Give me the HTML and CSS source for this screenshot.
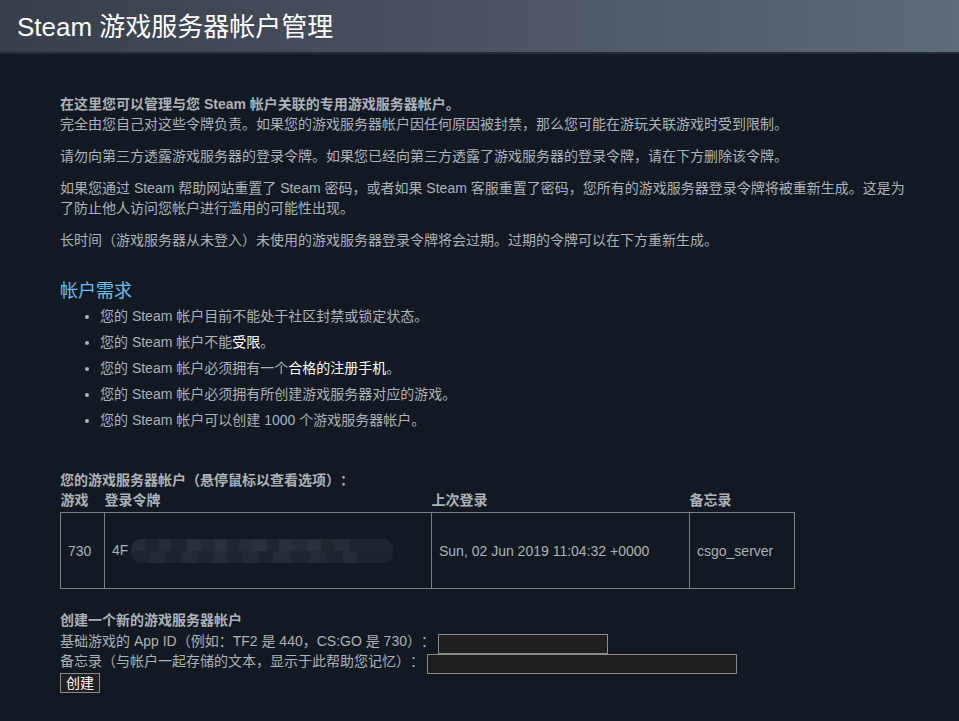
FILE: index.html
```html
<!DOCTYPE html>
<html lang="zh-CN">
<head>
    <meta charset="UTF-8">
    <title>Steam 游戏服务器帐户管理</title>
    <link rel="stylesheet" href="styles.css">
</head>
<body>

    <!-- Kop -->
    <div class="page-header">
        <h1 class="page-title">Steam 游戏服务器帐户管理</h1>
    </div>

    <div class="content">
        <p class="intro">
            <b>在这里您可以管理与您 Steam 帐户关联的专用游戏服务器帐户。</b><br>
            完全由您自己对这些令牌负责。如果您的游戏服务器帐户因任何原因被封禁，那么您可能在游玩关联游戏时受到限制。
        </p>
        <p>请勿向第三方透露游戏服务器的登录令牌。如果您已经向第三方透露了游戏服务器的登录令牌，请在下方删除该令牌。</p>
        <p>如果您通过 Steam 帮助网站重置了 Steam 密码，或者如果 Steam 客服重置了密码，您所有的游戏服务器登录令牌将被重新生成。这是为了防止他人访问您帐户进行滥用的可能性出现。</p>
        <p>长时间（游戏服务器从未登入）未使用的游戏服务器登录令牌将会过期。过期的令牌可以在下方重新生成。</p>

        <h2 class="section-heading">帐户需求</h2>
        <ul class="req-list">
            <li>您的 Steam 帐户目前不能处于社区封禁或锁定状态。</li>
            <li>您的 Steam 帐户不能<span class="hl">受限</span>。</li>
            <li>您的 Steam 帐户必须拥有一个<span class="hl">合格的注册手机</span>。</li>
            <li>您的 Steam 帐户必须拥有所创建游戏服务器对应的游戏。</li>
            <li>您的 Steam 帐户可以创建 1000 个游戏服务器帐户。</li>
        </ul>

        <div class="table-title">您的游戏服务器帐户（悬停鼠标以查看选项）：</div>
        <table class="account-table">
            <colgroup>
                <col class="col-game">
                <col class="col-token">
                <col class="col-login">
                <col class="col-memo">
            </colgroup>
            <thead>
                <tr>
                    <th>游戏</th>
                    <th>登录令牌</th>
                    <th>上次登录</th>
                    <th>备忘录</th>
                </tr>
            </thead>
            <tbody>
                <tr>
                    <td>730</td>
                    <td>4F<span class="token-blur"></span></td>
                    <td>Sun, 02 Jun 2019 11:04:32 +0000</td>
                    <td>csgo_server</td>
                </tr>
            </tbody>
        </table>

        <!-- Nieuw account -->
        <div class="create-form">
            <div class="create-title">创建一个新的游戏服务器帐户</div>
            <div class="form-row">基础游戏的 App ID（例如：TF2 是 440，CS:GO 是 730）：<input type="text" class="input-appid"></div>
            <div class="form-row">备忘录（与帐户一起存储的文本，显示于此帮助您记忆）：<input type="text" class="input-memo"></div>
            <div class="form-row button-row"><button class="create-button">创建</button></div>
        </div>
    </div>

</body>
</html>
```

FILE: styles.css
```css
body {
    margin: 0;
    background-color: #121923;
    color: #acb2b8;
    font-family: "Liberation Sans", Arial, "Noto Sans CJK SC", sans-serif;
    font-size: 14px;
    line-height: 20px;
    height: 100vh;
    text-spacing-trim: space-all;
}

.page-header {
    height: 52px;
    background: linear-gradient(90deg, #383f4b 0%, #4b5361 50%, #5f6a77 100%);
    border-bottom: 2px solid #252d38;
}

.page-title {
    margin: 0;
    padding-left: 17px;
    font-size: 26px;
    font-weight: normal;
    line-height: 54px;
    color: #ffffff;
}

.content {
    padding: 40px 0 0 60px;
    width: 850px;
}

.content p {
    margin: 0 0 12px 0;
}

.intro b {
    font-weight: bold;
}

.section-heading {
    margin: 30px 0 0 0;
    font-size: 18px;
    font-weight: normal;
    line-height: 23px;
    color: #67c1f5;
}

.req-list {
    margin: 0;
    padding-left: 40px;
}

.req-list li {
    line-height: 26px;
}

.hl {
    color: #ffffff;
}

.table-title {
    margin-top: 37px;
    font-weight: bold;
}

.account-table {
    border-collapse: collapse;
    table-layout: fixed;
    width: 734px;
}

.col-game { width: 44px; }
.col-token { width: 327px; }
.col-login { width: 258px; }
.col-memo { width: 105px; }

.account-table th {
    text-align: left;
    font-weight: bold;
    padding: 0 0 2px 0;
    line-height: 20px;
}

.account-table td {
    border: 1px solid #7f7f7f;
    padding: 0 7px;
    height: 75px;
    white-space: nowrap;
}

/* Vervaagde token */
.token-blur {
    display: inline-block;
    width: 262px;
    height: 24px;
    margin-left: 3px;
    vertical-align: middle;
    border-radius: 10px;
    background:
        linear-gradient(90deg,
            #252c37 0 14px, #1f2530 14px 28px, #262d38 28px 40px, #1e2530 40px 56px,
            #29303b 56px 70px, #232a35 70px 84px, #2b323d 84px 96px, #202731 96px 108px,
            #262d38 108px 122px, #2a313c 122px 136px, #1f2630 136px 148px, #29303b 148px 162px,
            #242b36 162px 176px, #2a313c 176px 190px, #20272f 190px 202px, #262d38 202px 218px,
            #1f2630 218px 262px) top / 100% 50% no-repeat,
        linear-gradient(90deg,
            #1e2530 0 18px, #232a35 18px 34px, #1d232d 34px 50px, #242b36 50px 66px,
            #1f2630 66px 82px, #262d38 82px 96px, #1e2530 96px 112px, #232a35 112px 128px,
            #1d242e 128px 142px, #252c37 142px 160px, #1f2630 160px 178px, #242b36 178px 196px,
            #1e2530 196px 212px, #262d38 212px 226px, #1c232d 226px 262px) bottom / 100% 50% no-repeat;
}

.create-form {
    margin-top: 21px;
}

.create-title {
    font-weight: bold;
    height: 21px;
}

.form-row {
    height: 20px;
    line-height: 20px;
}

.form-row input {
    box-sizing: border-box;
    height: 20px;
    padding: 0 3px;
    margin: 3px 0 0 3px;
    vertical-align: top;
    background-color: #1f1f1f;
    border: 1px solid #8a8a8a;
    color: #ffffff;
}

.input-appid {
    width: 170px;
}

.input-memo {
    width: 310px;
}

.button-row {
    margin-top: 2px;
}

.create-button {
    box-sizing: border-box;
    height: 20px;
    padding: 0 5px;
    margin: 0;
    vertical-align: top;
    background-color: #1f1f1f;
    border: 1px solid #8a8a8a;
    color: #ffffff;
    font-family: "Liberation Sans", Arial, "Noto Sans CJK SC", sans-serif;
    font-size: 14px;
    line-height: 18px;
}
```
